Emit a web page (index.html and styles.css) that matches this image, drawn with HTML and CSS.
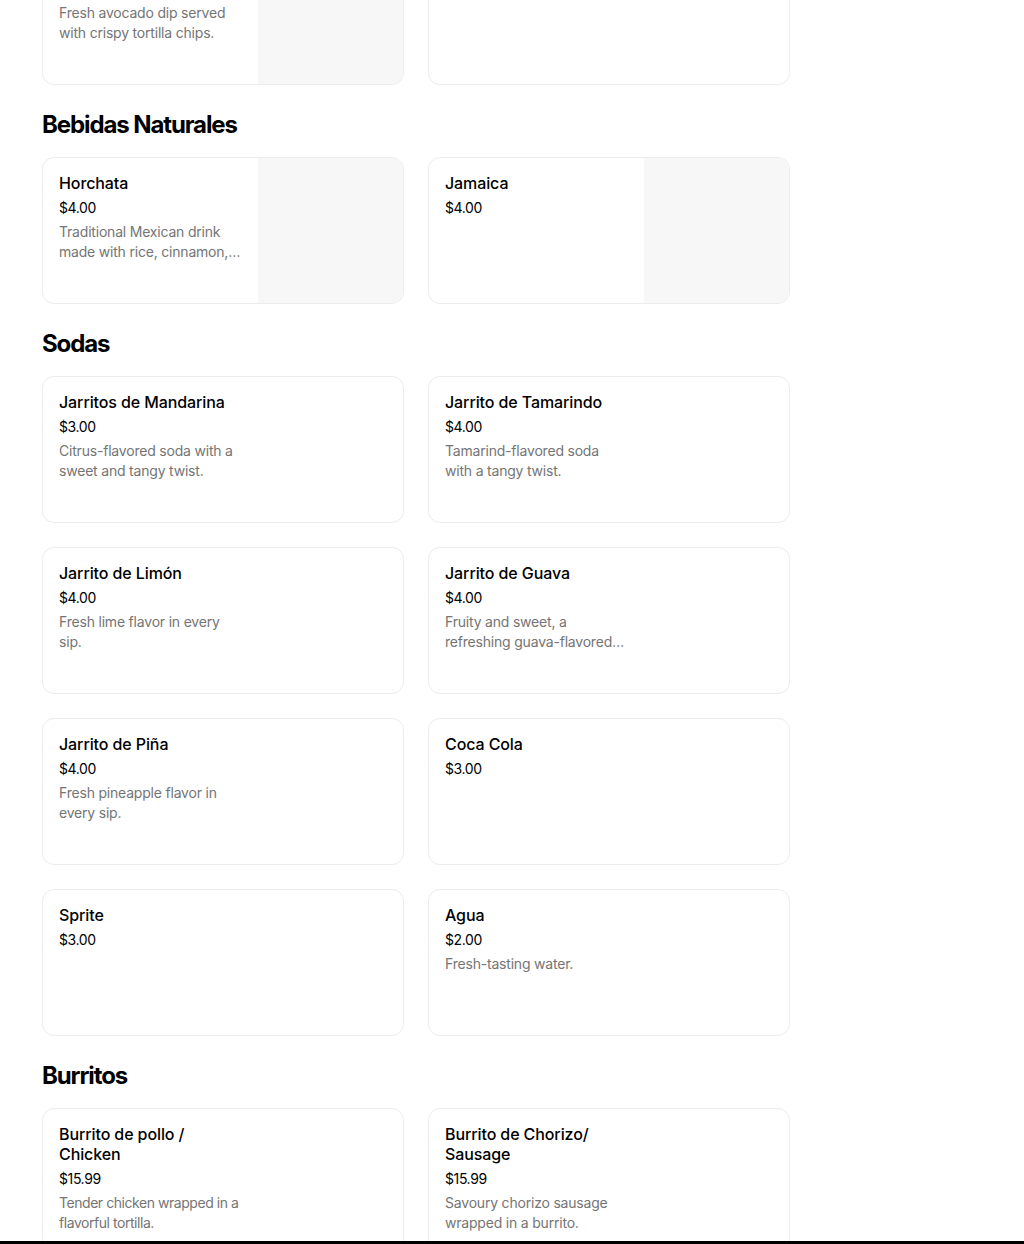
FILE: index.html
```html
<!DOCTYPE html>
<html lang="es">
<head>
<meta charset="utf-8">
<title>Menú</title>
<link rel="stylesheet" href="styles.css">
</head>
<body>
<main class="menu">
  <section class="section">
    <div class="grid">
      <article class="card">
        <div class="info">
          <h4 class="name">Guacamole y Totopos</h4>
          <div class="price">$8.00</div>
          <p class="desc">Fresh avocado dip served with crispy tortilla chips.</p>
        </div>
        <div class="img"></div>
      </article>
      <article class="card">
        <div class="info">
          <h4 class="name">Chips y Salsa</h4>
          <div class="price">$5.00</div>
        </div>
        <div class="noimg"></div>
      </article>
    </div>
  </section>

  <section class="section">
    <h3 class="section-title">Bebidas Naturales</h3>
    <div class="grid">
      <article class="card">
        <div class="info">
          <h4 class="name">Horchata</h4>
          <div class="price">$4.00</div>
          <p class="desc">Traditional Mexican drink made with rice, cinnamon, vanilla and sugar.</p>
        </div>
        <div class="img"></div>
      </article>
      <article class="card">
        <div class="info">
          <h4 class="name">Jamaica</h4>
          <div class="price">$4.00</div>
        </div>
        <div class="img"></div>
      </article>
    </div>
  </section>

  <section class="section">
    <h3 class="section-title">Sodas</h3>
    <div class="grid">
      <article class="card">
        <div class="info">
          <h4 class="name">Jarritos de Mandarina</h4>
          <div class="price">$3.00</div>
          <p class="desc">Citrus-flavored soda with a sweet and tangy twist.</p>
        </div>
        <div class="noimg"></div>
      </article>
      <article class="card">
        <div class="info">
          <h4 class="name">Jarrito de Tamarindo</h4>
          <div class="price">$4.00</div>
          <p class="desc">Tamarind-flavored soda with a tangy twist.</p>
        </div>
        <div class="noimg"></div>
      </article>
      <article class="card">
        <div class="info">
          <h4 class="name">Jarrito de Limón</h4>
          <div class="price">$4.00</div>
          <p class="desc">Fresh lime flavor in every sip.</p>
        </div>
        <div class="noimg"></div>
      </article>
      <article class="card">
        <div class="info">
          <h4 class="name">Jarrito de Guava</h4>
          <div class="price">$4.00</div>
          <p class="desc">Fruity and sweet, a refreshing guava-flavored soda.</p>
        </div>
        <div class="noimg"></div>
      </article>
      <article class="card">
        <div class="info">
          <h4 class="name">Jarrito de Piña</h4>
          <div class="price">$4.00</div>
          <p class="desc">Fresh pineapple flavor in every sip.</p>
        </div>
        <div class="noimg"></div>
      </article>
      <article class="card">
        <div class="info">
          <h4 class="name">Coca Cola</h4>
          <div class="price">$3.00</div>
        </div>
        <div class="noimg"></div>
      </article>
      <article class="card">
        <div class="info">
          <h4 class="name">Sprite</h4>
          <div class="price">$3.00</div>
        </div>
        <div class="noimg"></div>
      </article>
      <article class="card">
        <div class="info">
          <h4 class="name">Agua</h4>
          <div class="price">$2.00</div>
          <p class="desc">Fresh-tasting water.</p>
        </div>
        <div class="noimg"></div>
      </article>
    </div>
  </section>

  <section class="section">
    <h3 class="section-title">Burritos</h3>
    <div class="grid">
      <article class="card">
        <div class="info">
          <h4 class="name">Burrito de pollo / Chicken</h4>
          <div class="price">$15.99</div>
          <p class="desc desc-tight">Tender chicken wrapped in a flavorful tortilla.</p>
        </div>
        <div class="noimg"></div>
      </article>
      <article class="card">
        <div class="info">
          <h4 class="name">Burrito de Chorizo/ Sausage</h4>
          <div class="price">$15.99</div>
          <p class="desc">Savoury chorizo sausage wrapped in a burrito.</p>
        </div>
        <div class="noimg"></div>
      </article>
    </div>
  </section>
</main>
<div class="bottom-bar"></div>
</body>
</html>
```

FILE: styles.css
```css
html, body {
  margin: 0;
  padding: 0;
  background: #ffffff;
}

body {
  font-family: Inter, "Noto Sans", "Liberation Sans", sans-serif;
  color: #000000;
  overflow: hidden;
}

.menu {
  margin-top: -62px;
  padding-left: 42px;
  width: 748px;
}

.section-title {
  margin: 24px 0 16px;
  font-size: 24px;
  line-height: 32px;
  font-weight: 700;
  letter-spacing: -1.1px;
}

.grid {
  display: grid;
  grid-template-columns: 362px 362px;
  gap: 24px;
}

.card {
  box-sizing: border-box;
  height: 147px;
  border: 1px solid #ececec;
  border-radius: 12px;
  overflow: hidden;
  display: grid;
  grid-template-columns: 1fr 145px;
  background: #ffffff;
}

.info {
  padding: 15px 16px 16px;
  min-width: 0;
}

.name {
  margin: 0;
  font-size: 16px;
  line-height: 20px;
  font-weight: 500;
  letter-spacing: -0.1px;
}

.price {
  margin-top: 5px;
  font-size: 14px;
  line-height: 20px;
  font-weight: 400;
  letter-spacing: -0.4px;
}

.desc {
  margin: 4px 0 0;
  font-size: 14px;
  line-height: 20px;
  color: #757575;
  letter-spacing: -0.2px;
  display: -webkit-box;
  -webkit-line-clamp: 2;
  -webkit-box-orient: vertical;
  overflow: hidden;
}

.desc-tight {
  letter-spacing: -0.45px;
}

.img {
  background: #f7f7f7;
}

.noimg {
  background: transparent;
}

.bottom-bar {
  position: fixed;
  left: 0;
  right: 0;
  bottom: 0;
  height: 3px;
  background: #000000;
}
```
